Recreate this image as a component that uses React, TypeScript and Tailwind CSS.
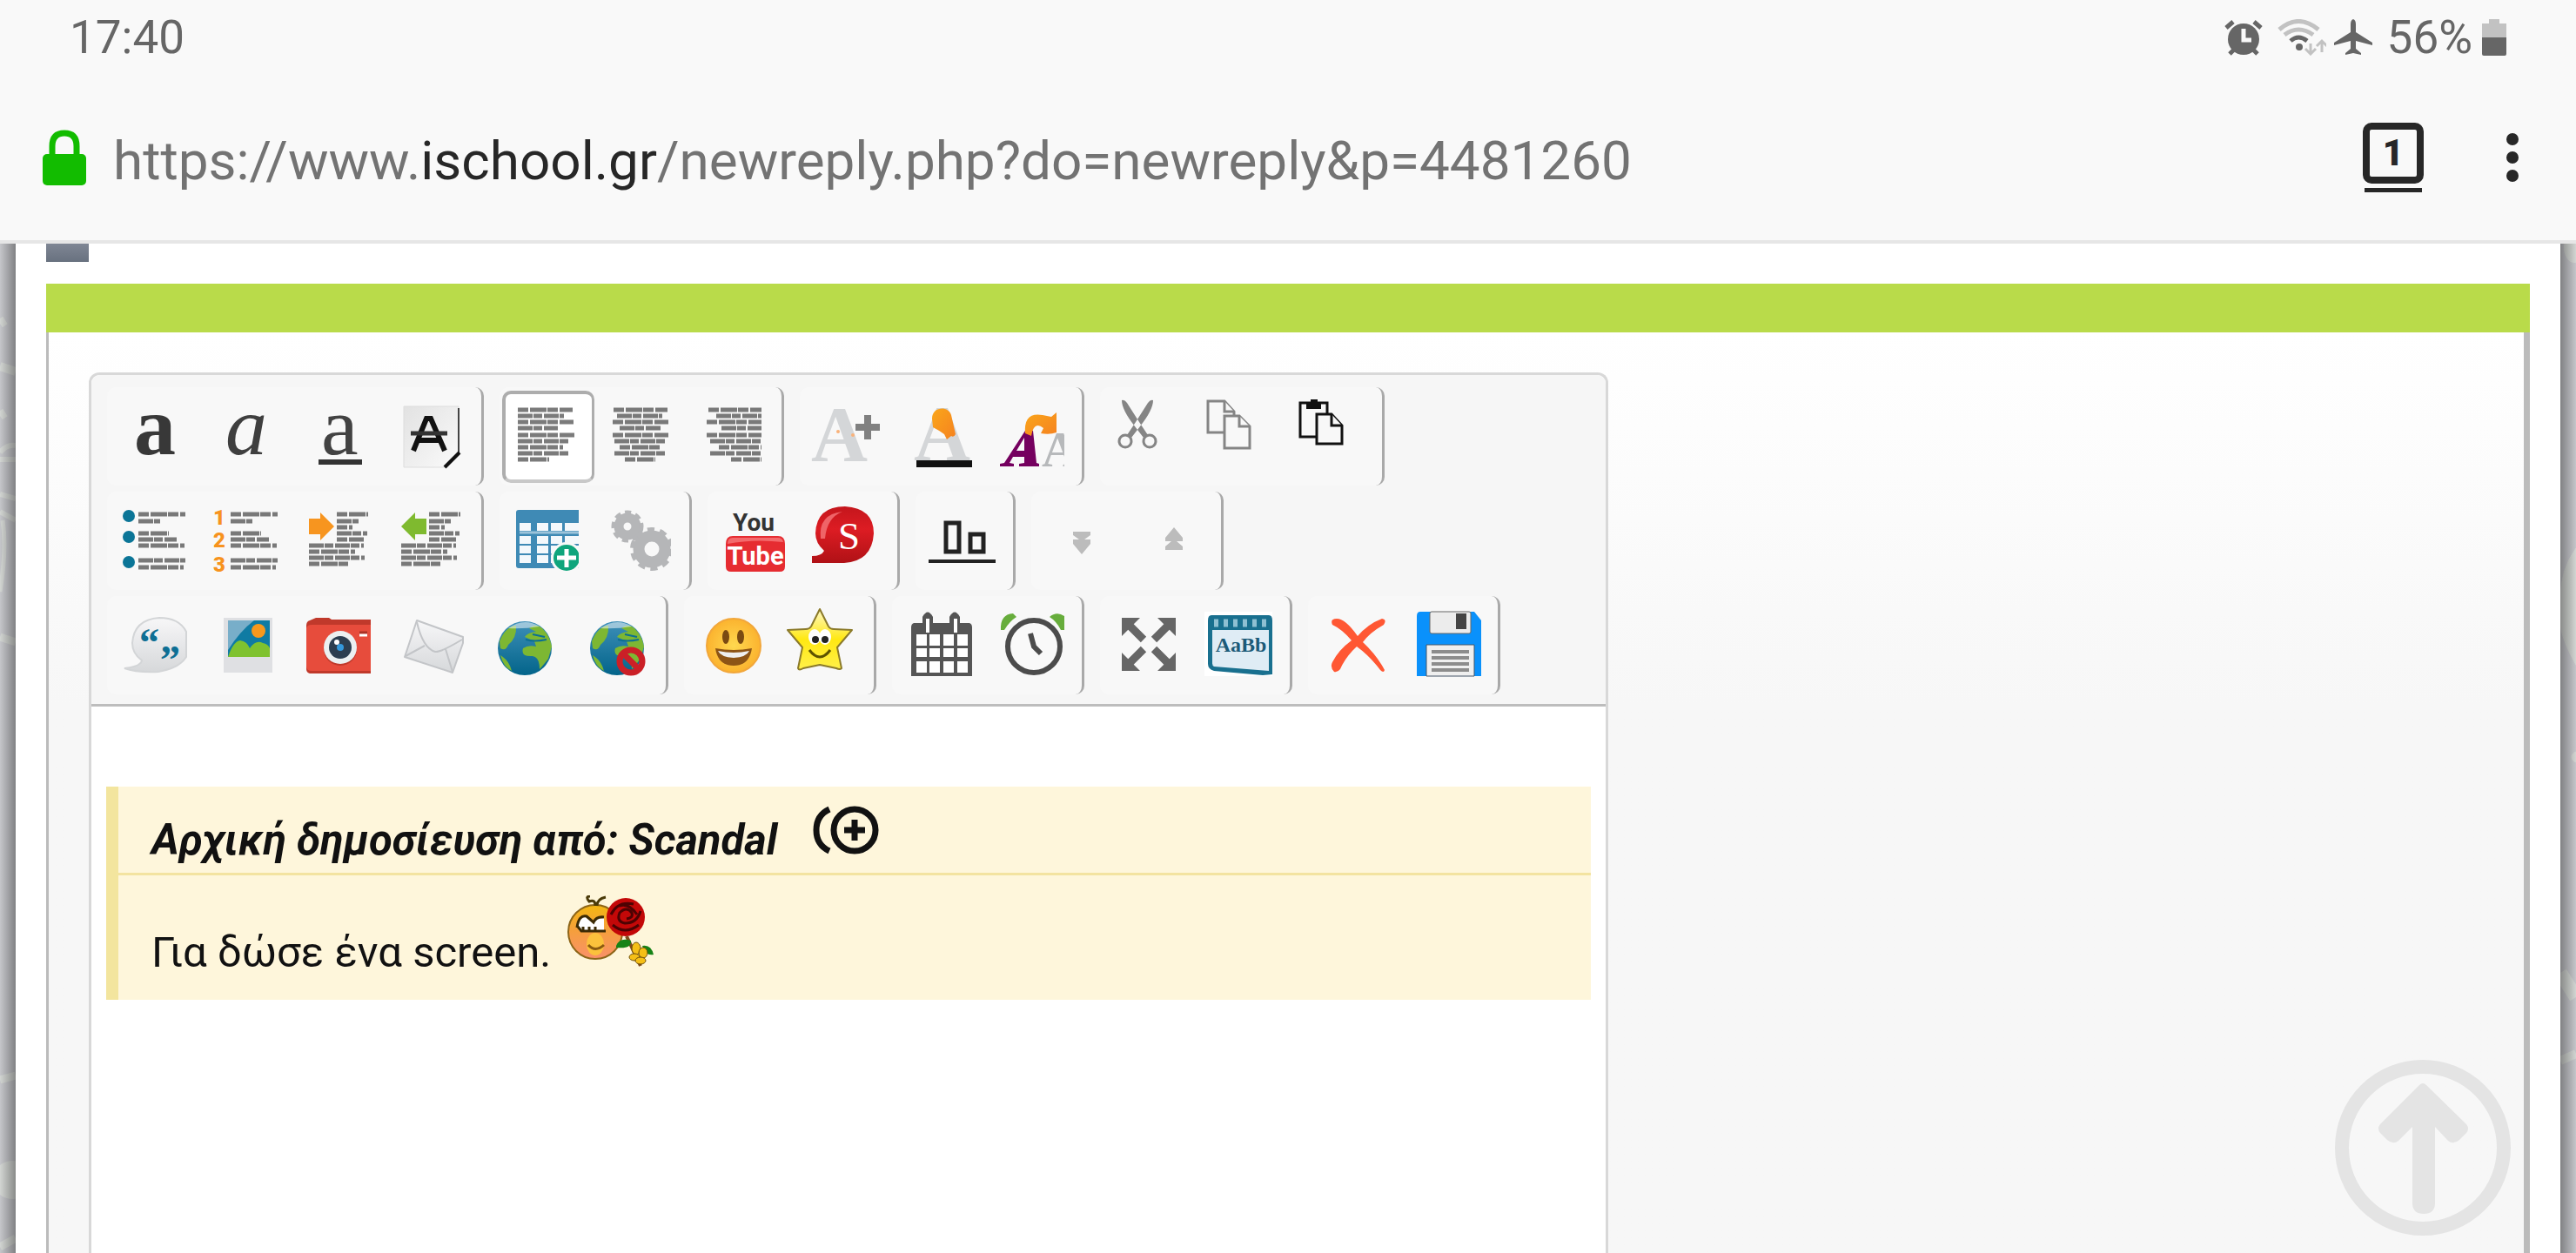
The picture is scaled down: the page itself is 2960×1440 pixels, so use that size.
import type { ReactNode } from "react";

const SERIF = "'Liberation Serif', serif";

type Line = [x1: number, x2: number, y: number];

// rows of tiny unreadable copy, used by the paragraph icons
function Copy({ lines }: { lines: Line[] }) {
  return (
    <g stroke="#444" strokeWidth="5" opacity="0.7">
      {lines.map(([x1, x2, y], i) => (
        <path
          key={y}
          d={`M${x1} ${y}H${x2}`}
          strokeDasharray={i % 2 ? "17 1 10 2" : "12 2 19 1"}
        />
      ))}
    </g>
  );
}

const LIST_LINES: Line[] = [
  [33, 87, 22],
  [33, 58, 30],
  [33, 68, 44],
  [33, 77, 51],
  [33, 86, 58],
  [33, 87, 75],
  [33, 85, 83],
];

const INDENT_LINES: Line[] = [
  [49, 85, 22],
  [49, 74, 30],
  [49, 67, 37],
  [49, 84, 44],
  [49, 80, 51],
  [17, 80, 58],
  [17, 70, 65],
  [17, 81, 72],
  [17, 62, 79],
];

const Bold = (
  <text x="28" y="73" fontFamily={SERIF} fontSize="96" fontWeight="700" fill="#383838">
    a
  </text>
);

const Italic = (
  <text x="27" y="73" fontFamily={SERIF} fontSize="96" fontStyle="italic" fill="#3f3f3f">
    a
  </text>
);

const Underline = (
  <g fill="#424242">
    <text x="31" y="73" fontFamily={SERIF} fontSize="96">
      a
    </text>
    <rect x="28" y="79" width="50" height="6" fill="#333" />
  </g>
);

const Strike = (
  <g>
    <path d="M20 18H83V71L67 88H20Z" fill="url(#paper)" stroke="#ddd" />
    <path d="M83 20V71" stroke="#444" strokeWidth="2" />
    <path d="M84 71L67 88" stroke="#111" strokeWidth="4" />
    <path d="M31 69L46 32H51L67 69M37 57H61" fill="none" stroke="#111" strokeWidth="6" />
    <path d="M28 49H70" stroke="#333" strokeWidth="5" />
  </g>
);

const AlignLeft = (
  <Copy
    lines={[
      [18, 81, 22],
      [18, 71, 29],
      [18, 82, 36],
      [18, 64, 43],
      [18, 83, 51],
      [18, 78, 58],
      [18, 70, 65],
      [18, 78, 72],
      [18, 54, 79],
    ]}
  />
);

const AlignCenter = (
  <Copy
    lines={[
      [22, 84, 22],
      [26, 78, 29],
      [21, 85, 36],
      [29, 76, 43],
      [21, 85, 51],
      [23, 83, 58],
      [29, 77, 65],
      [23, 81, 72],
      [35, 70, 79],
    ]}
  />
);

const AlignRight = (
  <Copy
    lines={[
      [25, 86, 22],
      [34, 86, 29],
      [23, 86, 36],
      [40, 86, 43],
      [23, 86, 51],
      [27, 86, 58],
      [37, 86, 65],
      [27, 86, 72],
      [51, 86, 79],
    ]}
  />
);

const FontSize = (
  <g>
    <text x="10" y="81" fontFamily={SERIF} fontSize="90" fontWeight="700" fill="#d4d6d8">
      A
    </text>
    <circle cx="41" cy="47" r="2" fill="#f9b27a" />
    <circle cx="58" cy="51" r="2" fill="#f9b27a" />
    <path d="M75 28V56M61 42H89" stroke="#808080" strokeWidth="8" />
  </g>
);

const FontColor = (
  <g>
    <text x="22" y="80" fontFamily={SERIF} fontSize="90" fontWeight="700" fill="#d4d6d8">
      A
    </text>
    <path
      d="M43 32C43 18 62 17 65 28L70 50Q68 54 65 52L60 56L57 50Q50 45 44 42Z"
      fill="url(#orange)"
    />
    <rect x="25" y="80" width="64" height="8" fill="#111" />
  </g>
);

const RemoveFormat = (
  <g>
    <text x="63" y="87" fontFamily={SERIF} fontSize="58" fontWeight="700" fill="#b7b9bb">
      A
    </text>
    <rect x="89" y="40" width="17" height="50" fill="#f8f8f8" />
    <path
      d="M15 87V84L20 83L44 46H53L57 83L60 84V87H37V84L43 83V76H30L26 83L31 84V87ZM34 69H43V54Z"
      fill="#75005f"
      fillRule="evenodd"
    />
    <path
      d="M44 49Q42 24 64 28L74 30L80 25V48Q72 51 62 49L65 43Q54 34 51 52Z"
      fill="url(#orange)"
    />
  </g>
);

const Cut = (
  <g fill="none" stroke="#858585">
    <path
      d="M22 11Q25 10 28 14L42 36L52 51L47 54L37 41Q22 22 22 11ZM58 11Q55 10 52 14L38 36L28 51L33 54L43 41Q58 22 58 11Z"
      fill="#858585"
      stroke="none"
    />
    <circle cx="26" cy="58" r="7" strokeWidth="3" />
    <circle cx="54" cy="58" r="7" strokeWidth="3" />
  </g>
);

const CopyPages = (
  <g fill="#f8f8f8" stroke="#858585" strokeWidth="3">
    <path d="M15 12H34L45 24V48H15Z" />
    <path d="M34 12V24H45" />
    <path d="M34 29H51L63 41V66H34Z" />
    <path d="M51 29V41H63" />
  </g>
);

const Paste = (
  <g fill="#f8f8f8" stroke="#111" strokeWidth="3">
    <path d="M15 14H46V53H15Z" />
    <path d="M22 13H27V10H35V13H39V21H22Z" fill="#111" stroke="none" />
    <path d="M34 27H51L63 40V61H34Z" />
    <path d="M51 27V40H63" />
  </g>
);

const Bullets = (
  <g>
    <g fill="#0b7597">
      <circle cx="22" cy="24" r="7" />
      <circle cx="22" cy="48" r="7" />
      <circle cx="22" cy="77" r="7" />
    </g>
    <Copy lines={LIST_LINES} />
  </g>
);

const Numbers = (
  <g>
    <g fontFamily="Roboto, sans-serif" fontSize="24" fontWeight="900" fill="#f7931e">
      <text x="13" y="34">
        1
      </text>
      <text x="13" y="60">
        2
      </text>
      <text x="13" y="88">
        3
      </text>
    </g>
    <Copy lines={LIST_LINES} />
  </g>
);

const Indent = (
  <g>
    <path d="M17 27H30V20L46 36L30 52V45H17Z" fill="#f7951f" />
    <Copy lines={INDENT_LINES} />
  </g>
);

const Outdent = (
  <g>
    <path d="M46 27H33V20L17 36L33 52V45H46Z" fill="#7fba2f" />
    <Copy lines={INDENT_LINES} />
  </g>
);

const Table = (
  <g>
    <path d="M19 17H88V84H19Q16 84 16 81V20Q16 17 19 17Z" fill="#3f8ab5" />
    <g fill="#f4f8fb">
      {[32, 47, 58, 69].map((y) =>
        [20, 40, 56, 72].map((x) => (
          <rect key={`${x}-${y}`} x={x} y={y} width={x === 72 ? 16 : 13} height="9" />
        )),
      )}
    </g>
    <path d="M20 43H88" stroke="#9cc3da" strokeWidth="3" />
    <circle cx="74" cy="72" r="18" fill="#f8f8f8" />
    <circle cx="74" cy="72" r="15" fill="#0fa57c" />
    <path d="M74 62V83M63 72H85" stroke="#fff" strokeWidth="5" />
    <rect x="88" y="52" width="8" height="40" fill="#f8f8f8" />
    <rect x="54" y="88" width="40" height="6" fill="#f8f8f8" />
  </g>
);

const Gears = (
  <g fill="none" stroke="#b5b6b8">
    <circle cx="38" cy="36" r="10" strokeWidth="11" />
    <circle cx="38" cy="36" r="16" strokeWidth="5" strokeDasharray="7 5" />
    <circle cx="66" cy="62" r="15" strokeWidth="13" />
    <circle cx="66" cy="62" r="22" strokeWidth="6" strokeDasharray="8 6" />
    <rect x="88" y="40" width="10" height="50" fill="#f8f8f8" stroke="none" />
  </g>
);

const YouTube = (
  <g fontFamily="Roboto, sans-serif" fontWeight="700" textAnchor="middle">
    <text x="50" y="41" fontSize="28" fill="#333">
      You
    </text>
    <path d="M26 47H78Q86 47 86 56V82Q86 88 80 88H24Q18 88 18 82V56Q18 47 26 47Z" fill="#e62c31" />
    <path d="M26 49H78Q83 49 84 54Q50 50 20 56Q20 49 26 49Z" fill="#f36a6c" />
    <text x="52" y="80" fontSize="29" fill="#fff">
      Tube
    </text>
  </g>
);

const SpeechS = (
  <g>
    <path
      d="M11 70Q22 70 25 64Q15 55 15 44Q16 13 49 13Q82 15 82 44Q80 76 48 78H11Z"
      fill="url(#red)"
    />
    <path d="M21 50Q18 22 46 19Q28 26 26 50Z" fill="#ef6468" />
    <text x="41" y="62" fontFamily={SERIF} fontSize="45" fill="#fff">
      S
    </text>
  </g>
);

const Blocks = (
  <g fill="#f8f8f8" stroke="#222" strokeWidth="5">
    <rect x="32" y="32" width="15" height="33" />
    <rect x="60" y="45" width="15" height="20" />
    <path d="M12 76H89" strokeWidth="4" />
  </g>
);

const ExpandDown = (
  <path d="M45 42H65V46L58 51H65V56L55 68L45 56V51H52L45 46Z" fill="#bcbcbc" />
);

const CollapseUp = (
  <path d="M45 63H65V59L58 53H65V49L55 37L45 49V53H52L45 59Z" fill="#bcbcbc" />
);

const Quote = (
  <g>
    <path
      d="M88 37Q80 21 57 21Q28 23 26 50Q26 62 37 70Q36 77 17 79Q30 84 56 83Q80 79 88 66Z"
      fill="url(#silver)"
      stroke="#d3d5d7"
      strokeWidth="2"
    />
    <g fontFamily={SERIF} fontSize="46" fontWeight="700" fill="#0e6f94">
      <text x="34" y="65">
        “
      </text>
      <text x="58" y="85">
        ”
      </text>
    </g>
  </g>
);

const Picture = (
  <g>
    <rect x="25" y="21" width="56" height="63" fill="#dfe0e3" />
    <rect x="30" y="24" width="48" height="42" fill="#0f7ba3" />
    <path d="M30 24H60Q44 36 30 58Z" fill="#78aec9" />
    <circle cx="65" cy="36" r="8" fill="#f7981d" />
    <path d="M30 66Q36 48 44 47Q52 48 55 56Q62 46 70 50Q76 51 78 56V66Z" fill="#7fc22f" />
  </g>
);

const Camera = (
  <g>
    <path d="M14 30Q14 25 18 24L25 21H40L43 23H88V85H18Q14 84 14 80Z" fill="#c0392b" />
    <path d="M14 33Q15 29 20 29H88V82H20Q14 82 14 76Z" fill="#e74c3c" />
    <path d="M75 38H84" stroke="#a93226" strokeWidth="3" />
    <path d="M75 41H84" stroke="#fff" strokeWidth="3" />
    <circle cx="53" cy="57" r="19" fill="#c0392b" />
    <circle cx="53" cy="55" r="19" fill="#ecf0f1" />
    <circle cx="53" cy="55" r="13" fill="#2c3e50" />
    <circle cx="53" cy="55" r="4" fill="#3498db" />
    <circle cx="49" cy="49" r="3" fill="#fff" />
  </g>
);

const Envelope = (
  <g fill="url(#silver)" stroke="#c3c5c8" strokeWidth="2" strokeLinejoin="round">
    <path d="M35 24L88 43V50L76 84L21 66Z" />
    <path d="M35 26Q42 56 56 60Q62 61 87 46M22 65L44 53M76 83L68 57" fill="none" />
  </g>
);

const Globe = (
  <g>
    <circle cx="53" cy="56" r="31" fill="url(#ocean)" />
    <g fill="#7db733">
      <path d="M24 48Q31 31 43 30Q44 44 34 52Q31 60 25 56Z" />
      <path d="M53 43Q56 38 66 37L58 33Q66 27 73 33Q82 42 84 54L80 68Q73 77 70 80Q70 66 62 65Q48 66 51 56Q57 52 66 54L64 48Z" />
      <path d="M25 64Q35 70 38 82Q28 77 25 64Z" />
    </g>
    <path d="M54 46Q64 49 78 46M62 40L76 43" stroke="#0c6f93" strokeWidth="2" fill="none" />
    <path d="M34 33Q52 20 70 31Q52 34 34 33Z" fill="#fff" opacity="0.5" />
  </g>
);

const GlobeOff = (
  <g>
    {Globe}
    <circle cx="69" cy="71" r="13" fill="none" stroke="#cb2027" strokeWidth="7" />
    <path d="M60 62L78 80" stroke="#cb2027" strokeWidth="7" />
  </g>
);

const Smile = (
  <g>
    <circle cx="54" cy="53" r="31" fill="url(#face)" stroke="#f2a73b" strokeWidth="2" />
    <ellipse cx="45" cy="43" rx="4" ry="8" fill="#7b4a12" />
    <ellipse cx="62" cy="43" rx="4" ry="8" fill="#7b4a12" />
    <path d="M33 56Q54 60 75 56Q72 76 54 76Q36 76 33 56Z" fill="#8d5415" />
    <path d="M36 59Q54 63 72 59Q69 66 54 67Q39 66 36 59Z" fill="#eee" />
  </g>
);

const Star = (
  <g>
    <path
      d="M47 11L57 31Q59 34 63 34L84 35L67 55L72 79Q70 81 66 79L47 75L28 79Q23 82 22 79L27 55L10 35L31 34Q35 34 37 31Z"
      fill="url(#star)"
      stroke="#8b7a2a"
      strokeWidth="2"
      strokeLinejoin="round"
    />
    <ellipse cx="41" cy="43" rx="7" ry="9" fill="#fff" />
    <ellipse cx="53" cy="43" rx="7" ry="9" fill="#fff" />
    <circle cx="42" cy="46" r="4" fill="#222" />
    <circle cx="53" cy="46" r="4" fill="#222" />
    <path d="M35 58Q47 74 59 58" fill="none" stroke="#5d5300" strokeWidth="3" />
  </g>
);

const Calendar = (
  <g>
    <path
      d="M22 27H32V20Q38 9 44 20V27H63V20Q69 9 75 20V27H86Q89 28 89 32V88H19V32Q19 28 22 27Z"
      fill="#555"
    />
    <path d="M38 22V38M70 22V38" stroke="#fff" strokeWidth="4" />
    <g fill="#fff">
      {[40, 56, 71].map((y) =>
        [25, 40, 56, 72].map((x) => (
          <rect key={`${x}-${y}`} x={x} y={y} width="12" height={y === 56 ? 10 : 13} />
        )),
      )}
    </g>
  </g>
);

const Alarm = (
  <g>
    <path d="M16 35Q15 17 30 16L34 20Q26 25 20 35Z" fill="#67ad3c" />
    <path d="M72 20Q80 13 89 19V35H85Q80 25 72 20Z" fill="#67ad3c" />
    <circle cx="54" cy="54" r="30" fill="#f9f9f9" stroke="#4c4c4c" strokeWidth="6" />
    <path d="M50 39L54 54L62 62" fill="none" stroke="#4c4c4c" strokeWidth="6" />
  </g>
);

const Fullscreen = (
  <g fill="none" stroke="#666" strokeWidth="9">
    <path d="M28 27L47 46M78 27L59 46M28 76L47 57M78 76L59 57" />
    <path
      d="M22 21H43L22 42ZM84 21H63L84 42ZM22 82H43L22 61ZM84 82H63L84 61Z"
      fill="#666"
      stroke="none"
    />
  </g>
);

const FontSample = (
  <g>
    <rect x="11" y="14" width="78" height="74" fill="#fff" />
    <path d="M19 18H85Q89 18 89 24V86L78 87L22 82Q15 80 15 74V24Q15 18 19 18Z" fill="#19708f" />
    <path d="M20 35H85V82L22 77Q20 76 20 73Z" fill="#dfecf5" />
    <path d="M22 27H86" stroke="#8fc0d2" strokeWidth="9" strokeDasharray="5 6" />
    <text
      x="53"
      y="60"
      fontFamily={SERIF}
      fontSize="24"
      fontWeight="700"
      textAnchor="middle"
      fill="#1c5a78"
    >
      AaBb
    </text>
  </g>
);

const Delete = (
  <path
    d="M25 29Q22 22 30 22Q40 22 54 42Q66 28 82 22Q88 23 84 29Q68 38 60 49Q76 64 85 81Q84 85 80 81Q68 65 53 54Q40 66 34 80Q31 84 27 83Q22 78 25 72Q32 58 47 47Q36 34 25 29Z"
    fill="#ff5733"
  />
);

const Save = (
  <g>
    <path d="M16 19Q16 14 20 14H82L90 24V88H16Z" fill="#0a91fb" />
    <rect x="31" y="14" width="47" height="25" rx="2" fill="#ececec" stroke="#666" />
    <rect x="61" y="16" width="12" height="18" fill="#444" />
    <path d="M27 88V52H82V88Z" fill="#efefef" stroke="#456" />
    <path d="M33 60H76M33 67H76M33 74H76M33 81H76" stroke="#8c8c8c" strokeWidth="4" />
  </g>
);

type Tool = { label: string; icon: ReactNode; active?: boolean };

const TOOLBAR: Tool[][][] = [
  [
    [
      { label: "Bold", icon: Bold },
      { label: "Italic", icon: Italic },
      { label: "Underline", icon: Underline },
      { label: "Strikethrough", icon: Strike },
    ],
    [
      { label: "Align left", icon: AlignLeft, active: true },
      { label: "Align center", icon: AlignCenter },
      { label: "Align right", icon: AlignRight },
    ],
    [
      { label: "Font size", icon: FontSize },
      { label: "Font color", icon: FontColor },
      { label: "Remove formatting", icon: RemoveFormat },
    ],
    [
      { label: "Cut", icon: Cut },
      { label: "Copy", icon: CopyPages },
      { label: "Paste", icon: Paste },
    ],
  ],
  [
    [
      { label: "Bullet list", icon: Bullets },
      { label: "Numbered list", icon: Numbers },
      { label: "Increase indent", icon: Indent },
      { label: "Decrease indent", icon: Outdent },
    ],
    [
      { label: "Insert table", icon: Table },
      { label: "Options", icon: Gears },
    ],
    [
      { label: "YouTube", icon: YouTube },
      { label: "Spoiler", icon: SpeechS },
    ],
    [{ label: "Align blocks", icon: Blocks }],
    [
      { label: "Expand", icon: ExpandDown },
      { label: "Collapse", icon: CollapseUp },
    ],
  ],
  [
    [
      { label: "Quote", icon: Quote },
      { label: "Image", icon: Picture },
      { label: "Camera", icon: Camera },
      { label: "Email", icon: Envelope },
      { label: "Link", icon: Globe },
      { label: "Unlink", icon: GlobeOff },
    ],
    [
      { label: "Smilies", icon: Smile },
      { label: "More smilies", icon: Star },
    ],
    [
      { label: "Date", icon: Calendar },
      { label: "Time", icon: Alarm },
    ],
    [
      { label: "Fullscreen", icon: Fullscreen },
      { label: "Font", icon: FontSample },
    ],
    [
      { label: "Delete", icon: Delete },
      { label: "Save", icon: Save },
    ],
  ],
];

function ToolButton({ label, icon, active }: Tool) {
  return (
    <button
      type="button"
      aria-label={label}
      aria-pressed={active}
      className={
        active
          ? "relative size-[106px] rounded-[10px] bg-white before:absolute before:inset-0 before:rounded-[10px] before:border-4 before:border-[#adadad] before:border-r-[3px] before:border-b-[#c8c8c8]"
          : "size-[106px]"
      }
    >
      <svg viewBox="0 0 106 106" className="size-full overflow-visible" aria-hidden="true">
        {icon}
      </svg>
    </button>
  );
}

function Toolbar() {
  return (
    <div
      role="toolbar"
      className="flex flex-col gap-[7px] rounded-t-[10px] border-b-[3px] border-[#bdbdbd] bg-[#f6f6f6] pt-[14px] pb-[11px] pl-[18px]"
    >
      {TOOLBAR.map((row, i) => (
        <div key={i} className="flex gap-[18px]">
          {row.map((group, j) => (
            <div
              key={j}
              className="flex h-[113px] items-center rounded-[10px] border-r-[3px] border-[#a9a9a9] bg-[#f8f8f8] px-[3px]"
            >
              {group.map((tool) => (
                <ToolButton key={tool.label} {...tool} />
              ))}
            </div>
          ))}
        </div>
      ))}
    </div>
  );
}

function Gradients() {
  return (
    <svg className="absolute size-0" aria-hidden="true">
      <defs>
        <linearGradient id="paper" x1="0" y1="0" x2="1" y2="1">
          <stop offset="0" stopColor="#e2e2e2" />
          <stop offset="1" stopColor="#fafafa" />
        </linearGradient>
        <linearGradient id="orange" x1="0" y1="0" x2="1" y2="1">
          <stop offset="0" stopColor="#faa61a" />
          <stop offset="1" stopColor="#f58220" />
        </linearGradient>
        <linearGradient id="red" x1="0" y1="0" x2="0" y2="1">
          <stop offset="0" stopColor="#c4161c" />
          <stop offset="0.4" stopColor="#dd1c23" />
          <stop offset="1" stopColor="#b01116" />
        </linearGradient>
        <linearGradient id="silver" x1="0" y1="0" x2="0" y2="1">
          <stop offset="0" stopColor="#f7f7f8" />
          <stop offset="1" stopColor="#d6d8da" />
        </linearGradient>
        <linearGradient id="ocean" x1="0" y1="0" x2="0" y2="1">
          <stop offset="0" stopColor="#3d8fb8" />
          <stop offset="1" stopColor="#03648a" />
        </linearGradient>
        <radialGradient id="face">
          <stop offset="0" stopColor="#ffd84f" />
          <stop offset="1" stopColor="#fbb32f" />
        </radialGradient>
        <linearGradient id="star" x1="0" y1="0" x2="0" y2="1">
          <stop offset="0" stopColor="#fff9c9" />
          <stop offset="0.5" stopColor="#ffe812" />
          <stop offset="1" stopColor="#fff04a" />
        </linearGradient>
        <linearGradient id="blush" x1="0" y1="0" x2="0" y2="1">
          <stop offset="0" stopColor="#f3b711" />
          <stop offset="0.45" stopColor="#f5a03a" />
          <stop offset="1" stopColor="#f9906a" />
        </linearGradient>
      </defs>
    </svg>
  );
}

function StatusBar() {
  return (
    <div className="flex h-[86px] items-center justify-between px-[80px] text-[53px] leading-none text-[#666]">
      <span>17:40</span>
      <div className="flex items-center">
        <svg viewBox="0 0 44 42" className="mr-[17px] h-[42px] w-[44px]" aria-hidden="true">
          <circle cx="22" cy="23" r="18" fill="#666" />
          <path
            d="M2 10L10 3M42 10L34 3M6 40L12 34M38 40L32 34"
            stroke="#666"
            strokeWidth="5"
          />
          <path d="M22 11V24H31" fill="none" stroke="#f9f9f9" strokeWidth="5" />
        </svg>
        <svg viewBox="0 0 56 42" className="mr-[9px] h-[42px] w-[56px]" aria-hidden="true">
          <g fill="none" stroke="#c2c2c2" strokeWidth="5">
            <path d="M2 12Q24 -7 47 12M8 18Q24 6 41 18" />
            <path d="M15 25Q24 17 34 25" stroke="#666" />
            <path d="M38 28V40M32 34L38 40L44 34M51 38V25M45 31L51 25L57 31" strokeWidth="3" />
          </g>
          <circle cx="25" cy="32" r="4" fill="#666" />
        </svg>
        <svg viewBox="0 0 44 42" className="mr-[17px] h-[42px] w-[44px]" aria-hidden="true">
          <path
            d="M22 0Q25 1 25 6V15L44 27V30L25 25V34L31 39V41L22 39L13 41V39L19 34V25L0 30V27L19 15V6Q19 1 22 0Z"
            fill="#666"
          />
        </svg>
        <span>56%</span>
        <svg viewBox="0 0 28 42" className="ml-[11px] h-[42px] w-[28px]" aria-hidden="true">
          <path d="M8 0H20V5H28V22H0V5H8Z" fill="#c2c2c2" />
          <path d="M0 21H28V40Q28 42 26 42H2Q0 42 0 40Z" fill="#666" />
        </svg>
      </div>
    </div>
  );
}

function AddressBar() {
  return (
    <div className="flex h-[190px] items-center pr-[66px] pl-[49px]">
      <svg viewBox="0 0 50 64" className="h-[64px] w-[50px]" aria-label="Secure">
        <rect y="28" width="50" height="36" rx="5" fill="#12bc00" />
        <path d="M11 32V19Q11 4 25 4Q39 4 39 19V32" fill="none" stroke="#12bc00" strokeWidth="7" />
      </svg>
      <a
        href="https://www.ischool.gr/newreply.php?do=newreply&p=4481260"
        className="ml-[31px] flex-1 pt-[8px] text-[62px] leading-[76px] text-[#737373]"
      >
        https://www.<span className="text-[#272727]">ischool.gr</span>
        /newreply.php?do=newreply&amp;p=4481260
      </a>
      <button type="button" aria-label="Tabs" className="flex flex-col items-center gap-[5px]">
        <span className="flex size-[70px] items-center justify-center rounded-[10px] border-8 border-[#272727] text-[42px] leading-none font-black text-[#272727]">
          1
        </span>
        <span className="h-[5px] w-[66px] bg-[#272727]" />
      </button>
      <button type="button" aria-label="Menu" className="ml-[95px] flex flex-col gap-[7px]">
        <span className="size-[14px] rounded-full bg-[#272727]" />
        <span className="size-[14px] rounded-full bg-[#272727]" />
        <span className="size-[14px] rounded-full bg-[#272727]" />
      </button>
    </div>
  );
}

function LeftGutter() {
  return (
    <div className="relative w-[18px] overflow-hidden bg-[#c5c6ca]">
      <svg
        viewBox="0 0 18 1160"
        className="absolute top-0 left-0 h-[1160px] w-[18px]"
        fill="none"
        stroke="#d2d5d2"
        aria-hidden="true"
      >
        <path d="M0 92L6 88M0 141L18 147M0 198L6 194" strokeWidth="10" />
        <path d="M0 240Q8 230 18 232M0 248H18M0 288L18 293M0 308L18 318" strokeWidth="6" />
        <path d="M3 318Q8 350 0 400" strokeWidth="5" />
        <path d="M0 452L18 458M0 961L18 956M0 1153L18 1143" strokeWidth="9" />
        <ellipse cx="14" cy="1076" rx="22" ry="22" fill="#d2d5d2" stroke="none" />
      </svg>
      <div className="absolute inset-0 bg-linear-to-r from-transparent to-black/35" />
    </div>
  );
}

function RightGutter() {
  return (
    <div className="relative w-[18px] overflow-hidden bg-[#c5c6ca]">
      <svg
        viewBox="0 0 18 1160"
        className="absolute top-0 left-0 h-[1160px] w-[18px]"
        fill="none"
        stroke="#d2d5d2"
        aria-hidden="true"
      >
        <ellipse cx="16" cy="4" rx="12" ry="18" fill="#d2d5d2" stroke="none" />
        <path d="M18 350Q0 374 0 410V440Q4 460 18 484Z" fill="#d2d5d2" />
        <path d="M0 838L18 866" strokeWidth="16" />
        <path d="M0 939L18 931" strokeWidth="10" />
        <circle cx="19" cy="590" r="6" fill="#d2d5d2" />
      </svg>
      <div className="absolute inset-0 bg-linear-to-l from-transparent to-black/35" />
    </div>
  );
}

function RoseSmiley() {
  return (
    <svg
      viewBox="0 0 100 82"
      className="mb-[2px] ml-[19px] h-[82px] w-[100px]"
      role="img"
      aria-label="Smiley with a rose"
    >
      <circle cx="32" cy="42" r="31" fill="url(#blush)" stroke="#8d6518" strokeWidth="2" />
      <ellipse cx="32" cy="56" rx="10" ry="13" fill="#fbc13c" />
      <path d="M32 12Q32 4 25 7Q20 1 26 1M34 12Q34 4 44 2" fill="none" stroke="#4a3a08" strokeWidth="3" />
      <path d="M12 36Q14 22 22 24Q26 25 30 31Q33 24 42 26V41H14Z" fill="#fff" />
      <path
        d="M11 37Q13 22 22 24L30 31Q33 24 42 25M12 36L16 41H44"
        fill="none"
        stroke="#3c2b05"
        strokeWidth="3"
      />
      <path d="M18 41V36M25 41V36M32 41V36" stroke="#3c2b05" strokeWidth="3" />
      <path d="M24 57Q32 66 42 57" fill="none" stroke="#8b5a10" strokeWidth="3" />
      <circle cx="67" cy="25" r="22" fill="#c30808" />
      <path
        d="M50 22Q58 6 76 10M84 18Q80 32 66 32Q56 30 60 20Q68 12 74 20Q76 26 68 27M52 34Q66 46 82 34M60 12Q70 8 80 22"
        fill="none"
        stroke="#4d0303"
        strokeWidth="3"
      />
      <path d="M68 47L84 81" stroke="#7e4c1c" strokeWidth="4" />
      <path d="M56 58Q60 48 73 52Q74 62 56 60ZM86 58Q96 56 99 68Q90 70 86 58Z" fill="#168316" />
      <g fill="#f5bf17" stroke="#6d4d09">
        <ellipse cx="79" cy="61" rx="5" ry="7" />
        <ellipse cx="87" cy="66" rx="5" ry="6" />
        <ellipse cx="77" cy="71" rx="6" ry="4" />
        <ellipse cx="84" cy="75" rx="6" ry="4" />
      </g>
    </svg>
  );
}

function QuotedPost() {
  return (
    <blockquote className="border-l-[14px] border-[#f3e59e] bg-[#fef6db] text-[49px] leading-[58px] text-[#111]">
      <div className="flex h-[102px] items-end border-b-[3px] border-[#f3e3a0] pb-[8px] pl-[38px]">
        <span className="font-bold italic">Αρχική δημοσίευση από: Scandal</span>
        <a href="#post" aria-label="View post" className="mb-[13px] ml-[41px]">
          <svg
            viewBox="0 0 76 56"
            className="h-[56px] w-[76px]"
            fill="none"
            stroke="#111"
            strokeWidth="7"
          >
            <circle cx="48" cy="28" r="24" />
            <path d="M19 4Q4 11 4 28Q4 45 19 52M48 16V40M36 28H60" />
          </svg>
        </a>
      </div>
      <div className="flex h-[143px] items-end pb-[25px] pl-[38px]">
        <p>Για δώσε ένα screen.</p>
        <div className="mb-[11px]">
          <RoseSmiley />
        </div>
      </div>
    </blockquote>
  );
}

export default function App() {
  return (
    <div className="flex min-h-screen flex-col bg-white font-[Roboto,sans-serif]">
      <Gradients />
      <header className="border-b-4 border-[#e6e6e6] bg-[#f9f9f9]">
        <StatusBar />
        <AddressBar />
      </header>

      <div className="flex flex-1">
        <LeftGutter />
        <main className="flex flex-1 flex-col px-[35px]">
          <div className="h-[21px] w-[49px] bg-linear-to-b from-[#7f8694] to-[#68717f]" />
          <div className="mt-[25px] h-[56px] bg-[#b9db4a]" />
          <section className="flex flex-1 flex-col border-r-[7px] border-l-[3px] border-[#bbb] bg-linear-to-b from-white to-[#f7f7f7] to-[430px] pt-[46px] pl-[46px]">
            <div className="w-full max-w-[1746px] flex-1 rounded-t-[12px] border-3 border-b-0 border-[#d8d8d8] bg-white">
              <Toolbar />
              <div
                role="textbox"
                aria-multiline="true"
                aria-label="Message"
                className="px-[17px] pt-[92px]"
              >
                <QuotedPost />
              </div>
            </div>
          </section>
        </main>
        <RightGutter />
      </div>

      <a href="#top" aria-label="Back to top" className="fixed right-[75px] bottom-[20px]">
        <svg viewBox="0 0 202 202" className="size-[202px]" fill="none" stroke="#e4e4e4">
          <circle cx="101" cy="101" r="93" strokeWidth="16" />
          <path
            d="M97 29Q101 25 105 29L151 74Q155 79 151 84L143 92Q136 98 130 93L115 77V166Q114 177 102 177Q90 177 89 166V77L73 93Q67 98 60 92L52 84Q48 79 52 74Z"
            fill="#e4e4e4"
            stroke="none"
          />
        </svg>
      </a>
    </div>
  );
}
